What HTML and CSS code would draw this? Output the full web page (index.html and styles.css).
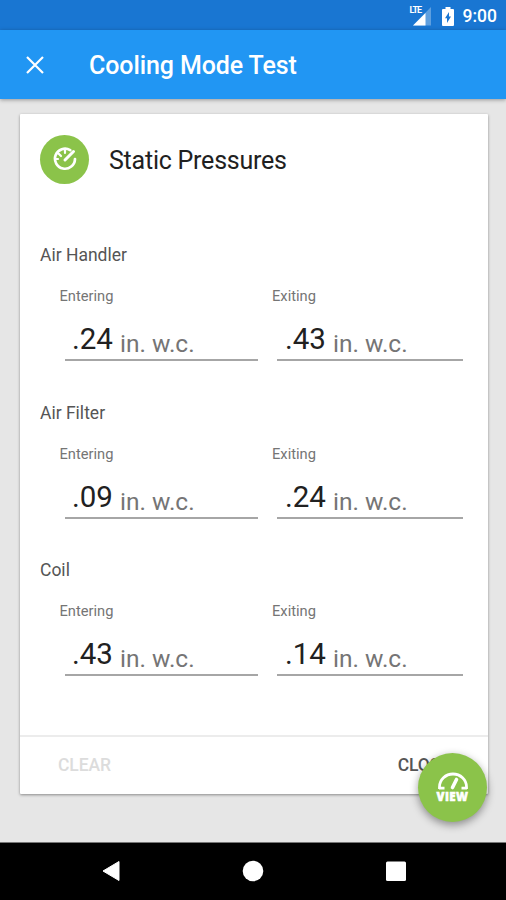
FILE: index.html
```html
<!DOCTYPE html>
<html lang="en">
<head>
<meta charset="utf-8">
<title>Cooling Mode Test</title>
<link rel="stylesheet" href="styles.css">
</head>
<body>
<div class="screen">
  <header class="status">
    <span class="signal">
      <svg width="24" height="22" viewBox="0 0 24 22"><path d="M23 2v18.500H5z" fill="#fff" opacity=".3"/><path d="M17.500 8v12.500H5z" fill="#fff"/></svg>
      <span class="lte">LTE</span>
    </span>
    <svg class="battery" width="12" height="19" viewBox="0 0 12 19"><path d="M3.500 0h5v2H11q1 0 1 1v15q0 1-1 1H1q-1 0-1-1V3q0-1 1-1h2.500z" fill="#fff"/><path d="M7 5v4.500h2L5 16v-4.700H3z" fill="#1976d2"/></svg>
    <span class="clock">9:00</span>
  </header>
  <div class="appbar">
    <svg class="close" width="18" height="18" viewBox="0 0 18 18"><path d="M1 1l16 16M17 1L1 17" stroke="#fff" stroke-width="2.200"/></svg>
    <h1>Cooling Mode Test</h1>
  </div>
  <main>
    <section class="card">
      <div class="card-head">
        <span class="avatar">
          <svg width="24" height="24" viewBox="0 0 24 24" fill="none" stroke="#fff" stroke-linecap="round"><path d="M17.200 3.200A10 10 0 1 0 22 12" stroke-width="2.700"/><path d="M12 13L20.500 4.500" stroke-width="3"/><path d="M2.500 12H5M5.500 6.500L8 9M12 2.500V6" stroke-width="2.200"/></svg>
        </span>
        <h2>Static Pressures</h2>
      </div>
      <div class="group">
        <h3>Air Handler</h3>
        <div class="fields">
          <div class="field"><label>Entering</label><div class="input"><b>.24</b><i>in. w.c.</i></div></div>
          <div class="field"><label>Exiting</label><div class="input"><b>.43</b><i>in. w.c.</i></div></div>
        </div>
      </div>
      <div class="group">
        <h3>Air Filter</h3>
        <div class="fields">
          <div class="field"><label>Entering</label><div class="input"><b>.09</b><i>in. w.c.</i></div></div>
          <div class="field"><label>Exiting</label><div class="input"><b>.24</b><i>in. w.c.</i></div></div>
        </div>
      </div>
      <div class="group">
        <h3>Coil</h3>
        <div class="fields">
          <div class="field"><label>Entering</label><div class="input"><b>.43</b><i>in. w.c.</i></div></div>
          <div class="field"><label>Exiting</label><div class="input"><b>.14</b><i>in. w.c.</i></div></div>
        </div>
      </div>
      <footer class="actions"><span class="clear">CLEAR</span><span>CLOSE</span></footer>
    </section>
    <div class="fab">
      <svg width="32" height="18" viewBox="0 0 32 18" fill="none" stroke="#fff"><path d="M2.500 17v-2a13.500 13 0 0 1 27 0v2M2 16.200h5.500M24.500 16.200H30" stroke-width="2.800"/><path d="M15.500 15.500L19.500 7.500" stroke-width="3.600" stroke-linecap="round"/></svg>
      <span>VIEW</span>
    </div>
  </main>
  <nav class="navbar">
    <svg width="18" height="22" viewBox="0 0 18 22"><path d="M17 1.500v19L1 11z" fill="#fff" stroke="#fff" stroke-linejoin="round"/></svg>
    <svg width="22" height="22" viewBox="0 0 22 22"><circle cx="11" cy="11" r="10.300" fill="#fff"/></svg>
    <svg width="20" height="22" viewBox="0 0 20 22"><rect y="1.500" width="20" height="19.500" rx="1.500" fill="#fff"/></svg>
  </nav>
</div>
</body>
</html>
```
FILE: styles.css
```css
* { box-sizing: border-box; }
body { margin: 0; font-family: Roboto, "Liberation Sans", sans-serif; }
h1, h2, h3 { margin: 0; }
svg { display: block; flex: none; }
.screen { width: 506px; height: 900px; display: flex; flex-direction: column; overflow: hidden; background: #e6e6e6; }
.status { height: 30px; flex: none; background: #1976d2; color: #fff; display: flex; justify-content: flex-end; align-items: center; padding: 2px 9px 0 0; }
.signal { position: relative; margin-right: 10px; }
.lte { position: absolute; left: 2px; top: 1px; font-size: 9px; line-height: 9px; font-weight: 700; letter-spacing: -1px; }
.battery { margin-right: 9px; }
.clock { font-size: 17.5px; font-weight: 500; line-height: 28px; }
.appbar { height: 69px; flex: none; background: #2196f3; color: #fff; display: flex; align-items: center; padding: 1px 0 0 26px; box-shadow: 0 1px 4px rgba(0,0,0,.35); }
.appbar h1 { margin-left: 45px; font-size: 25px; letter-spacing: -.1px; line-height: 30px; font-weight: 500; padding-top: 1px; }
main { position: relative; flex: 1; padding: 15px 18px 0 20px; }
.card { height: 680px; background: #fff; box-shadow: 0 1px 3px rgba(0,0,0,.4); display: flex; flex-direction: column; border-radius: 1px; }
.card-head { display: flex; align-items: center; gap: 20px; padding: 20px 20px 0; height: 70px; margin-bottom: 59px; }
.avatar { width: 49px; height: 49px; border-radius: 50%; background: #8bc34a; display: flex; align-items: center; justify-content: center; }
h2 { font-size: 25px; letter-spacing: -.23px; line-height: 30px; font-weight: 400; color: #212121; padding-top: 4px; }
.group { height: 157.5px; padding-left: 20px; }
h3 { font-size: 17.5px; line-height: 24px; font-weight: 400; color: #555; }
.fields { display: flex; padding: 19px 0 0 19.500px; }
.field { width: 212.500px; }
.field label { display: block; font-size: 14.700px; line-height: 20px; color: #757575; }
.input { width: 193px; height: 55px; margin-left: 5px; padding-left: 7.500px; border-bottom: 2px solid #a6a6a6; display: flex; }
.field + .field .input { width: 186px; padding-left: 8px; }
.input b { font-size: 29.500px; font-weight: 400; line-height: 34px; padding-top: 16px; color: #212121; }
.input i { font-size: 24.500px; font-style: normal; line-height: 30px; padding-top: 23px; margin-left: 7px; color: #757575; }
.actions { margin-top: auto; height: 59px; border-top: 2px solid #ececec; display: flex; justify-content: space-between; padding: 0 38px 0 38px; font-size: 17.5px; line-height: 57px; color: #555; }
.actions .clear { color: #dcdcdc; }
.actions span { font-weight: 500; letter-spacing: -.1px; }
.fab { position: absolute; left: 418px; top: 654px; width: 69px; height: 69px; border-radius: 50%; background: #8bc34a; box-shadow: 0 3px 8px rgba(0,0,0,.4); display: flex; flex-direction: column; align-items: center; padding-top: 19px; color: #fff; }
.fab span { font: 800 11.500px/12px "Open Sans", sans-serif; letter-spacing: .4px; -webkit-text-stroke: .5px #fff; padding-top: 1px; }
.navbar { height: 58px; flex: none; background: #000; border-top: 1px solid #777; display: flex; justify-content: center; align-items: center; gap: 122px; padding: 0 0 2px 1px; }
```
